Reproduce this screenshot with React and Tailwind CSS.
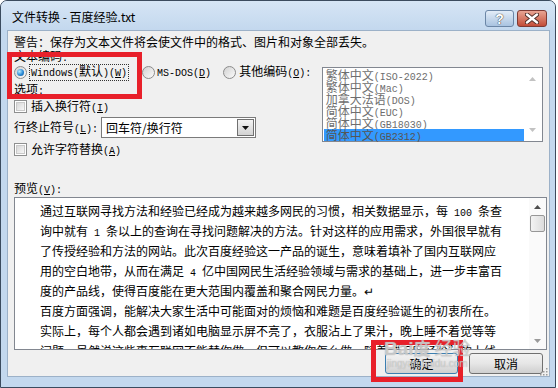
import React from "react";

const mono = "font-['Liberation_Mono',monospace] text-[10px]";

// SimSun look: half-width runs are 6px wide, CJK runs 12px wide
const Sim = ({ t }) =>
  t
    .split(/([\x00-\xff]+)/)
    .filter(Boolean)
    .map((s, i) =>
      /[\x00-\xff]/.test(s[0]) ? (
        <span key={i} className={mono}>
          {s}
        </span>
      ) : (
        <span key={i}>{s}</span>
      )
    );

const Key = ({ t, k, colon }) => (
  <>
    <Sim t={t + "("} />
    <span className={mono + " underline"}>{k}</span>
    <Sim t={")" + (colon ? ":" : "")} />
  </>
);

const Radio = ({ on }) => (
  <span className="flex w-[13px] h-[13px] shrink-0 items-center justify-center rounded-full border border-[#8b8b8b] bg-linear-to-br from-[#d2d2d2] to-[#fbfbfb]">
    {on && (
      <span className="w-[7px] h-[7px] rounded-full bg-[radial-gradient(circle_at_35%_35%,#b8ecff,#2a8ad6_55%,#0a4f8f)]" />
    )}
  </span>
);

const Check = () => (
  <span className="flex w-[13px] h-[13px] shrink-0 items-center justify-center border border-[#8e8f8f] bg-white">
    <span className="w-[9px] h-[9px] border border-[#c9c9c9] bg-linear-to-br from-[#d8d8d8] to-[#f7f7f7]" />
  </span>
);

const Arrow = ({ down, color }) => (
  <svg width="7" height="4" viewBox="0 0 7 4">
    <path d={down ? "M0 0h7L3.5 4z" : "M0 4h7L3.5 0z"} fill={color} />
  </svg>
);

const encodings = [
  "繁体中文(ISO-2022)",
  "繁体中文(Mac)",
  "加拿大法语(DOS)",
  "简体中文(EUC)",
  "简体中文(GB18030)",
  "简体中文(GB2312)",
];

const preview = [
  "通过互联网寻找方法和经验已经成为越来越多网民的习惯，相关数据显示，每 100 条查",
  "询中就有 1 条以上的查询在寻找问题解决的方法。针对这样的应用需求，外国很早就有",
  "了传授经验和方法的网站。此次百度经验这一产品的诞生，意味着填补了国内互联网应",
  "用的空白地带，从而在满足 4 亿中国网民生活经验领域与需求的基础上，进一步丰富百",
  "度的产品线，使得百度能在更大范围内覆盖和聚合网民力量。↵",
  "百度方面强调，能解决大家生活中可能面对的烦恼和难题是百度经验诞生的初衷所在。",
  "实际上，每个人都会遇到诸如电脑显示屏不亮了，衣服沾上了果汁，晚上睡不着觉等等",
  "问题，虽然说这些事互联网不能替你做，但可以教你怎么做。随着“百度经验”的上线",
];

export default function App() {
  return (
    <div className="relative w-[558px] h-[388px] bg-white font-['Noto_Sans_CJK_SC',sans-serif] text-[12px] text-black overflow-hidden">
      <div className="w-[556px] h-[388px] flex flex-col rounded-t-[7px] border border-[#3b4b5e] bg-[#c3d8ee]">
        {/* title bar */}
        <div className="h-[29px] flex items-start bg-linear-to-b from-[#d6e5f5] to-[#c3d8ee] rounded-t-[6px]">
          <div className="mt-[8px] ml-[11px] leading-[16px]">文件转换 - 百度经验.txt</div>
          <div className="ml-auto mr-[8px] mt-[9px] flex gap-[3px]">
            <div className="w-[29px] h-[17px] rounded-[3px] border border-[#6b86a6] bg-linear-to-b from-[#e3edf8] to-[#a9c3e0] flex items-center justify-center">
              <span className="font-['Liberation_Sans',sans-serif] font-bold text-[14px] leading-[14px] text-white [text-shadow:0_0_1px_#333,0_0_1px_#333]">?</span>
            </div>
            <div className="w-[30px] h-[17px] rounded-[3px] border border-[#7e3a33] bg-linear-to-b from-[#e8a493] to-[#c24c38] flex items-center justify-center">
              <svg width="14" height="11" viewBox="0 0 14 11">
                <path d="M2 1.5L12 9.5M12 1.5L2 9.5" stroke="#4a2a24" strokeWidth="4.2" strokeLinecap="round" />
                <path d="M2 1.5L12 9.5M12 1.5L2 9.5" stroke="#ffffff" strokeWidth="2.4" strokeLinecap="round" />
              </svg>
            </div>
          </div>
        </div>

        {/* client area */}
        <div className="ml-[6px] w-[543px] h-[347px] border border-[#9cb1c8] bg-[#f0f0f0] flex flex-col px-[6px] pt-[4px]">
          <div className="h-[14px] leading-[14px]">警告：保存为文本文件将会使文件中的格式、图片和对象全部丢失。</div>

          <div className="flex">
            <div className="w-[309px] flex flex-col">
              <div className="h-[14px] leading-[14px]">
                <Sim t="文本编码:" />
              </div>
              <div className="mt-[2px] h-[14px] flex items-center leading-[12px]">
                <Radio on />
                <span className="ml-[2px] px-[1px] border border-dotted border-[#333] leading-[12px] whitespace-pre">
                  <Key t="Windows(默认)" k="W" />
                </span>
                <span className="ml-[13px]">
                  <Radio />
                </span>
                <span className="ml-[2px] whitespace-pre">
                  <Key t="MS-DOS" k="D" />
                </span>
                <span className="ml-[12px]">
                  <Radio />
                </span>
                <span className="ml-[3px] whitespace-pre">
                  <Key t="其他编码" k="O" colon />
                </span>
              </div>
              <div className="mt-[3px] h-[14px] leading-[14px]">
                <Sim t="选项:" />
              </div>
              <div className="mt-[3px] h-[14px] flex items-center gap-[4px]">
                <Check />
                <span>
                  <Key t="插入换行符" k="I" />
                </span>
              </div>
              <div className="mt-[4px] h-[21px] flex items-center">
                <span className="w-[87px]">
                  <Key t="行终止符号" k="L" colon />
                </span>
                <div className="w-[155px] h-[21px] border border-[#7a7a7a] bg-white flex items-center">
                  <span className="ml-[4px]">回车符/换行符</span>
                  <div className="ml-auto mr-[1px] w-[17px] h-[17px] border border-[#707070] bg-linear-to-b from-[#f4f4f4] to-[#d3d3d3] flex items-center justify-center">
                    <Arrow down color="#111" />
                  </div>
                </div>
              </div>
              <div className="mt-[4px] h-[14px] flex items-center gap-[4px]">
                <Check />
                <span>
                  <Key t="允许字符替换" k="A" />
                </span>
              </div>
            </div>

            {/* encoding list */}
            <div className="mt-[18px] w-[222px] h-[75px] border border-[#828790] bg-white flex p-[1px]">
              <div className="flex-1 flex flex-col text-[#6e6e6e] leading-[12px]">
                {encodings.map((e, i) => (
                  <div key={i} className={"h-[12px] pl-[2px] whitespace-pre " + (i === 5 ? "bg-[#3399ff] text-[#555]" : "")}>
                    <Sim t={e} />
                  </div>
                ))}
              </div>
              <div className="w-[17px] flex flex-col items-center justify-between py-[8px]">
                <Arrow color="#c2c2c2" />
                <Arrow down color="#c2c2c2" />
              </div>
            </div>
          </div>

          <div className="mt-[25px] h-[14px] leading-[14px]">
            <Key t="预览" k="V" colon />
          </div>

          {/* preview */}
          <div className="mt-[2px] w-[533px] h-[153px] border border-[#828790] bg-white flex overflow-hidden">
            <div className="flex-1 pl-[25px] pt-[3px] overflow-hidden">
              {preview.map((l, i) => (
                <div key={i} className="h-[20px] leading-[20px] whitespace-pre">
                  <Sim t={l} />
                </div>
              ))}
            </div>
            <div className="w-[17px] flex flex-col items-center bg-[#fafafa]">
              <div className="h-[17px] flex items-center justify-center">
                <Arrow color="#4d4d4d" />
              </div>
              <div className="w-[15px] h-[17px] rounded-[2px] border border-[#979797] bg-linear-to-r from-[#f3f3f3] to-[#dcdcdc]" />
              <div className="mt-auto h-[17px] flex items-center justify-center">
                <Arrow down color="#9a9a9a" />
              </div>
            </div>
          </div>

          {/* buttons */}
          <div className="mt-[3px] flex justify-end gap-[11px]">
            <div className="w-[73px] h-[21px] rounded-[3px] border border-[#3c7fb1] bg-linear-to-b from-[#f2f2f2] via-[#e6e6e6] to-[#cfcfcf] flex items-center justify-center">
              确定
            </div>
            <div className="w-[74px] h-[21px] rounded-[3px] border border-[#707070] bg-linear-to-b from-[#f2f2f2] via-[#e6e6e6] to-[#cfcfcf] flex items-center justify-center">
              取消
            </div>
          </div>
        </div>
      </div>

      {/* size grip */}
      <svg className="absolute left-[538px] top-[366px]" width="10" height="10" viewBox="0 0 10 10">
        {[
          [8, 2], [8, 5], [5, 5], [8, 8], [5, 8], [2, 8],
        ].map(([x, y], i) => (
          <rect key={i} x={x} y={y} width="1.5" height="1.5" fill="#9a9a9a" />
        ))}
      </svg>

      {/* red highlight boxes */}
      <div className="absolute left-[7px] top-[52px] w-[135px] h-[47px] border-[5px] border-[#e8202a]" />
      <div className="absolute left-[371px] top-[340px] w-[92px] h-[42px] border-[5px] border-[#e8202a]" />

      {/* watermark */}
      <div className="absolute left-[384px] top-[338px] flex flex-col items-center text-white/45 [text-shadow:0_0_1px_#9a9a9a] pointer-events-none">
        <div className="flex items-baseline leading-[19px]">
          <span className="font-['Liberation_Sans',sans-serif] font-bold text-[19px]">Bai</span>
          <span className="text-[17px] font-bold">度</span>
          <span className="ml-[4px] text-[18px]">经验</span>
        </div>
        <div className="font-['Liberation_Sans',sans-serif] text-[10px] leading-[11px]">jingyan.baidu.com</div>
      </div>
    </div>
  );
}
